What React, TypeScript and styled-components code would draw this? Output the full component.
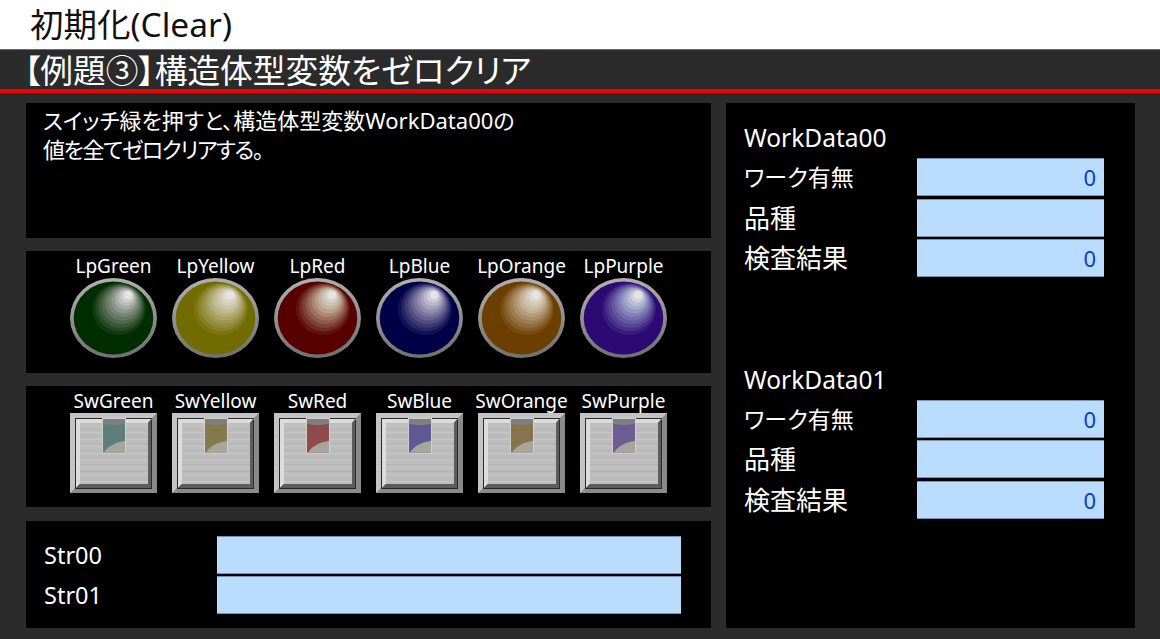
import React from 'react'
import styled, { createGlobalStyle } from 'styled-components'

const GlobalStyle = createGlobalStyle`
  html, body {
    margin: 0;
    padding: 0;
    background: #2b2b2b;
    overflow: hidden;
  }
  body {
    font-family: 'Noto Sans', 'Noto Sans CJK JP', sans-serif;
    font-feature-settings: 'palt';
    color: #fff;
  }
`

const Page = styled.div`
  width: 1160px;
  height: 639px;
  display: flex;
  flex-direction: column;
  overflow: hidden;
`

const TitleBar = styled.h1`
  height: 49px;
  margin: 0;
  padding-left: 30px;
  box-sizing: border-box;
  background: #fff;
  color: #111;
  font-size: 33.5px;
  font-weight: 400;
  line-height: 49px;
  white-space: nowrap;
`

const Heading = styled.h2`
  height: 44px;
  margin: 0;
  padding-left: 24px;
  box-sizing: border-box;
  background: #2b2b2b;
  border-top: 1px solid #6a6a6a;
  border-bottom: 4px solid #f00000;
  color: #fff;
  font-size: 32.7px;
  font-weight: 400;
  line-height: 41px;
  white-space: nowrap;
`

const Body = styled.main`
  display: flex;
  gap: 15px;
  padding: 10px 25px 11px 26px;
  flex: 1;
  min-height: 0;
`

const LeftColumn = styled.div`
  width: 685px;
  display: flex;
  flex-direction: column;
  gap: 13px;
`

const Panel = styled.section<{ $height?: number }>`
  background: #000;
  box-sizing: border-box;
  ${({ $height }) => ($height ? `height: ${$height}px;` : '')}
`

const Description = styled(Panel)`
  padding: 3px 0 0 17px;
  font-size: 22px;
  line-height: 29px;
`

const TightLine = styled.span`
  letter-spacing: -1.4px;
`

const DeviceRow = styled(Panel)`
  display: flex;
  gap: 15px;
  padding: 3px 0 0 44px;
`

const Device = styled.div`
  width: 87px;
  display: flex;
  flex-direction: column;
  align-items: center;
`

const DeviceLabel = styled.span`
  height: 24px;
  font-size: 19px;
  line-height: 24px;
  white-space: nowrap;
`

const StrPanel = styled(Panel)`
  flex: 1;
  margin-top: 1px;
  padding: 15px 30px 0 18px;
  display: flex;
  flex-direction: column;
  gap: 2px;
`

const WorkPanel = styled(Panel)`
  flex: 1;
  padding: 19px 31px 0 18px;
  display: flex;
  flex-direction: column;
  gap: 85px;
`

const WorkGroup = styled.div`
  display: flex;
  flex-direction: column;
`

const WorkTitle = styled.div`
  height: 35px;
  font-size: 24.5px;
  line-height: 31px;
`

const Row = styled.div<{ $height: number }>`
  display: grid;
  grid-template-columns: 173px 1fr;
  align-items: center;
  height: ${({ $height }) => $height}px;
`

const FieldLabel = styled.span<{ $compact?: boolean }>`
  font-size: ${({ $compact }) => ($compact ? 23 : 26)}px;
  line-height: 36px;
  white-space: nowrap;
`

const StrLabel = styled(FieldLabel)`
  font-size: 23.5px;
`

const Field = styled.output`
  display: block;
  height: 38px;
  box-sizing: border-box;
  padding-right: 8px;
  background: #b9dcff;
  border-top: 1px solid #7d93ad;
  border-bottom: 1px solid #7d93ad;
  color: #0a3ec4;
  font-size: 22px;
  line-height: 36px;
  text-align: right;
`

type Rgb = [number, number, number]

const mix = (a: Rgb, b: Rgb, t: number): Rgb =>
  a.map((v, i) => Math.round(v + (b[i] - v) * t)) as Rgb

const css = (c: Rgb) => `rgb(${c.join(',')})`

const LAMPS: { name: string; base: Rgb; mid: Rgb }[] = [
  { name: 'LpGreen', base: [0, 45, 0], mid: [140, 150, 140] },
  { name: 'LpYellow', base: [112, 108, 0], mid: [195, 185, 145] },
  { name: 'LpRed', base: [86, 0, 0], mid: [185, 160, 135] },
  { name: 'LpBlue', base: [0, 0, 70], mid: [145, 140, 175] },
  { name: 'LpOrange', base: [108, 62, 0], mid: [195, 175, 145] },
  { name: 'LpPurple', base: [45, 10, 115], mid: [145, 150, 195] },
]

const SWITCHES: { name: string; color: string }[] = [
  { name: 'SwGreen', color: '#5c7f7a' },
  { name: 'SwYellow', color: '#86794a' },
  { name: 'SwRed', color: '#8f4a4a' },
  { name: 'SwBlue', color: '#5f5a93' },
  { name: 'SwOrange', color: '#86754a' },
  { name: 'SwPurple', color: '#6e5c94' },
]

const STEPS = 11

// banded glow: base -> mid tone -> near white, the circles drift toward the highlight
const glowColor = (base: Rgb, mid: Rgb, t: number) =>
  t < 0.6 ? mix(base, mid, 0.12 + (0.88 * t) / 0.6) : mix(mid, [228, 228, 228], (t - 0.6) / 0.4)

const Lamp = ({ name, base, mid }: { name: string; base: Rgb; mid: Rgb }) => (
  <svg width="87" height="80" viewBox="0 0 87 80">
    <defs>
      <linearGradient id={`ring-${name}`} x1="0.4" y1="0" x2="0.5" y2="1">
        <stop offset="0" stopColor="#b0b0b0" />
        <stop offset="1" stopColor="#707070" />
      </linearGradient>
    </defs>
    <ellipse cx="43.5" cy="40" rx="43.5" ry="40" fill={`url(#ring-${name})`} />
    <ellipse cx="43.5" cy="40" rx="39.8" ry="36.4" fill={css(base)} />
    {Array.from({ length: STEPS }, (_, i) => {
      const t = i / (STEPS - 1)
      return (
        <ellipse
          key={i}
          cx={49 + 9 * t}
          cy={31 - 14 * t}
          rx={27 - 23 * t}
          ry={26 - 22 * t}
          fill={css(glowColor(base, mid, t))}
        />
      )
    })}
  </svg>
)

const SwitchIcon = ({ name, color }: { name: string; color: string }) => (
  <svg width="87" height="80" viewBox="0 0 87 80">
    <defs>
      <pattern id={`brush-${name}`} width="4" height="7" patternUnits="userSpaceOnUse">
        <rect width="4" height="7" fill="#bdbdbd" />
        <rect y="2" width="4" height="1" fill="#b5b5b5" />
        <rect y="5" width="4" height="1" fill="#c6c6c6" />
      </pattern>
    </defs>
    <rect width="87" height="80" fill={`url(#brush-${name})`} />
    <path d="M0 0H87L82 5H5V75L0 80Z" fill="#c8c8c8" opacity="0.6" />
    <path d="M87 0V80H0L5 75H82V5Z" fill="#8a8a8a" />
    <rect x="5" y="5" width="77" height="71" fill="#2a2a2a" />
    <path d="M6 75L10 71V10H78L82 6H6Z" fill="#dcdcdc" />
    <path d="M81 6V75H6L10 71H78V10Z" fill="#5c5c5c" />
    <rect x="10" y="10" width="68" height="61" fill={`url(#brush-${name})`} />
    <rect x="32.5" y="5.5" width="23" height="34.5" fill={color} stroke="#cfcfcf" />
    <path d="M33 6H55V10.5C48 12.5 40 12.5 33 10.5Z" fill="#7f7f7f" />
    <path d="M34 39.5C38 33 46 29 55 28V39.5Z" fill="#a6a69c" />
  </svg>
)

const WORK_GROUPS = ['WorkData00', 'WorkData01']

const WORK_FIELDS = [
  { label: 'ワーク有無', value: '0', compact: true },
  { label: '品種', value: '', compact: false },
  { label: '検査結果', value: '0', compact: false },
]

const App = () => (
  <Page>
    <GlobalStyle />
    <TitleBar>初期化(Clear)</TitleBar>
    <Heading>【例題③】構造体型変数をゼロクリア</Heading>
    <Body>
      <LeftColumn>
        <Description $height={135}>
          スイッチ緑を押すと、構造体型変数WorkData00の
          <br />
          <TightLine>値を全てゼロクリアする。</TightLine>
        </Description>
        <DeviceRow $height={122}>
          {LAMPS.map((lamp) => (
            <Device key={lamp.name}>
              <DeviceLabel>{lamp.name}</DeviceLabel>
              <Lamp {...lamp} />
            </Device>
          ))}
        </DeviceRow>
        <DeviceRow $height={121}>
          {SWITCHES.map((sw) => (
            <Device key={sw.name}>
              <DeviceLabel>{sw.name}</DeviceLabel>
              <SwitchIcon {...sw} />
            </Device>
          ))}
        </DeviceRow>
        <StrPanel>
          {['Str00', 'Str01'].map((label) => (
            <Row key={label} $height={38}>
              <StrLabel>{label}</StrLabel>
              <Field />
            </Row>
          ))}
        </StrPanel>
      </LeftColumn>
      <WorkPanel>
        {WORK_GROUPS.map((group) => (
          <WorkGroup key={group}>
            <WorkTitle>{group}</WorkTitle>
            {WORK_FIELDS.map((field) => (
              <Row key={field.label} $height={40.5}>
                <FieldLabel $compact={field.compact}>{field.label}</FieldLabel>
                <Field>{field.value}</Field>
              </Row>
            ))}
          </WorkGroup>
        ))}
      </WorkPanel>
    </Body>
  </Page>
)

export default App
